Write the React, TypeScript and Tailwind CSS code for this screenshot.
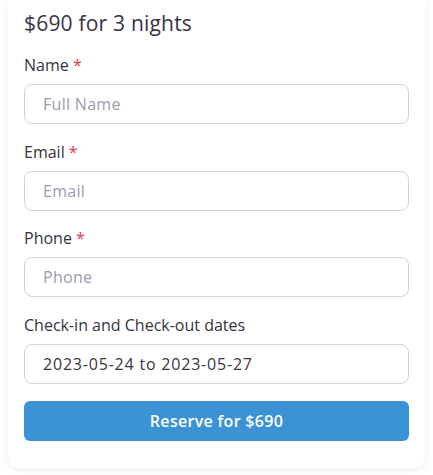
import React from 'react';

const fields = [
  { label: 'Name', placeholder: 'Full Name', required: true },
  { label: 'Email', placeholder: 'Email', required: true },
  { label: 'Phone', placeholder: 'Phone', required: true },
];

export default function App() {
  return (
    <div className="min-h-screen bg-white px-2 font-['Open_Sans',sans-serif]">
      <div className="rounded-b-xl bg-white px-4 pb-[27px] pt-[7.5px] shadow-[0_2px_10px_rgba(0,0,0,0.07)]">
        <h2 className="text-[21px] font-medium leading-[30px] tracking-[0.2px] text-[#363447]">$690 for 3 nights</h2>

        {fields.map((f) => (
          <div key={f.label} className="mt-[15.5px]">
            <label className="block text-[16px] leading-6 text-[#35333f]">
              {f.label} <span className="text-[#e0384d]">*</span>
            </label>
            <input
              placeholder={f.placeholder}
              className="mt-[7px] block h-10 w-full rounded-lg border border-[#d3d2dc] px-[18px] text-[16px] tracking-[0.3px] text-[#35333f] outline-none placeholder:text-[#9c99b0]"
            />
          </div>
        ))}

        <div className="mt-[15.5px]">
          <label className="block text-[16px] leading-6 text-[#35333f]">Check-in and Check-out dates</label>
          <input
            defaultValue="2023-05-24 to 2023-05-27"
            className="mt-[7px] block h-10 w-full rounded-lg border border-[#d3d2dc] px-[18px] text-[16px] tracking-[0.8px] text-[#3a3340] outline-none"
          />
        </div>

        <button className="mt-[17px] h-10 w-full rounded-md bg-[#3b93d6] text-[16px] font-semibold tracking-[0.3px] text-white">
          Reserve for $690
        </button>
      </div>
    </div>
  );
}
